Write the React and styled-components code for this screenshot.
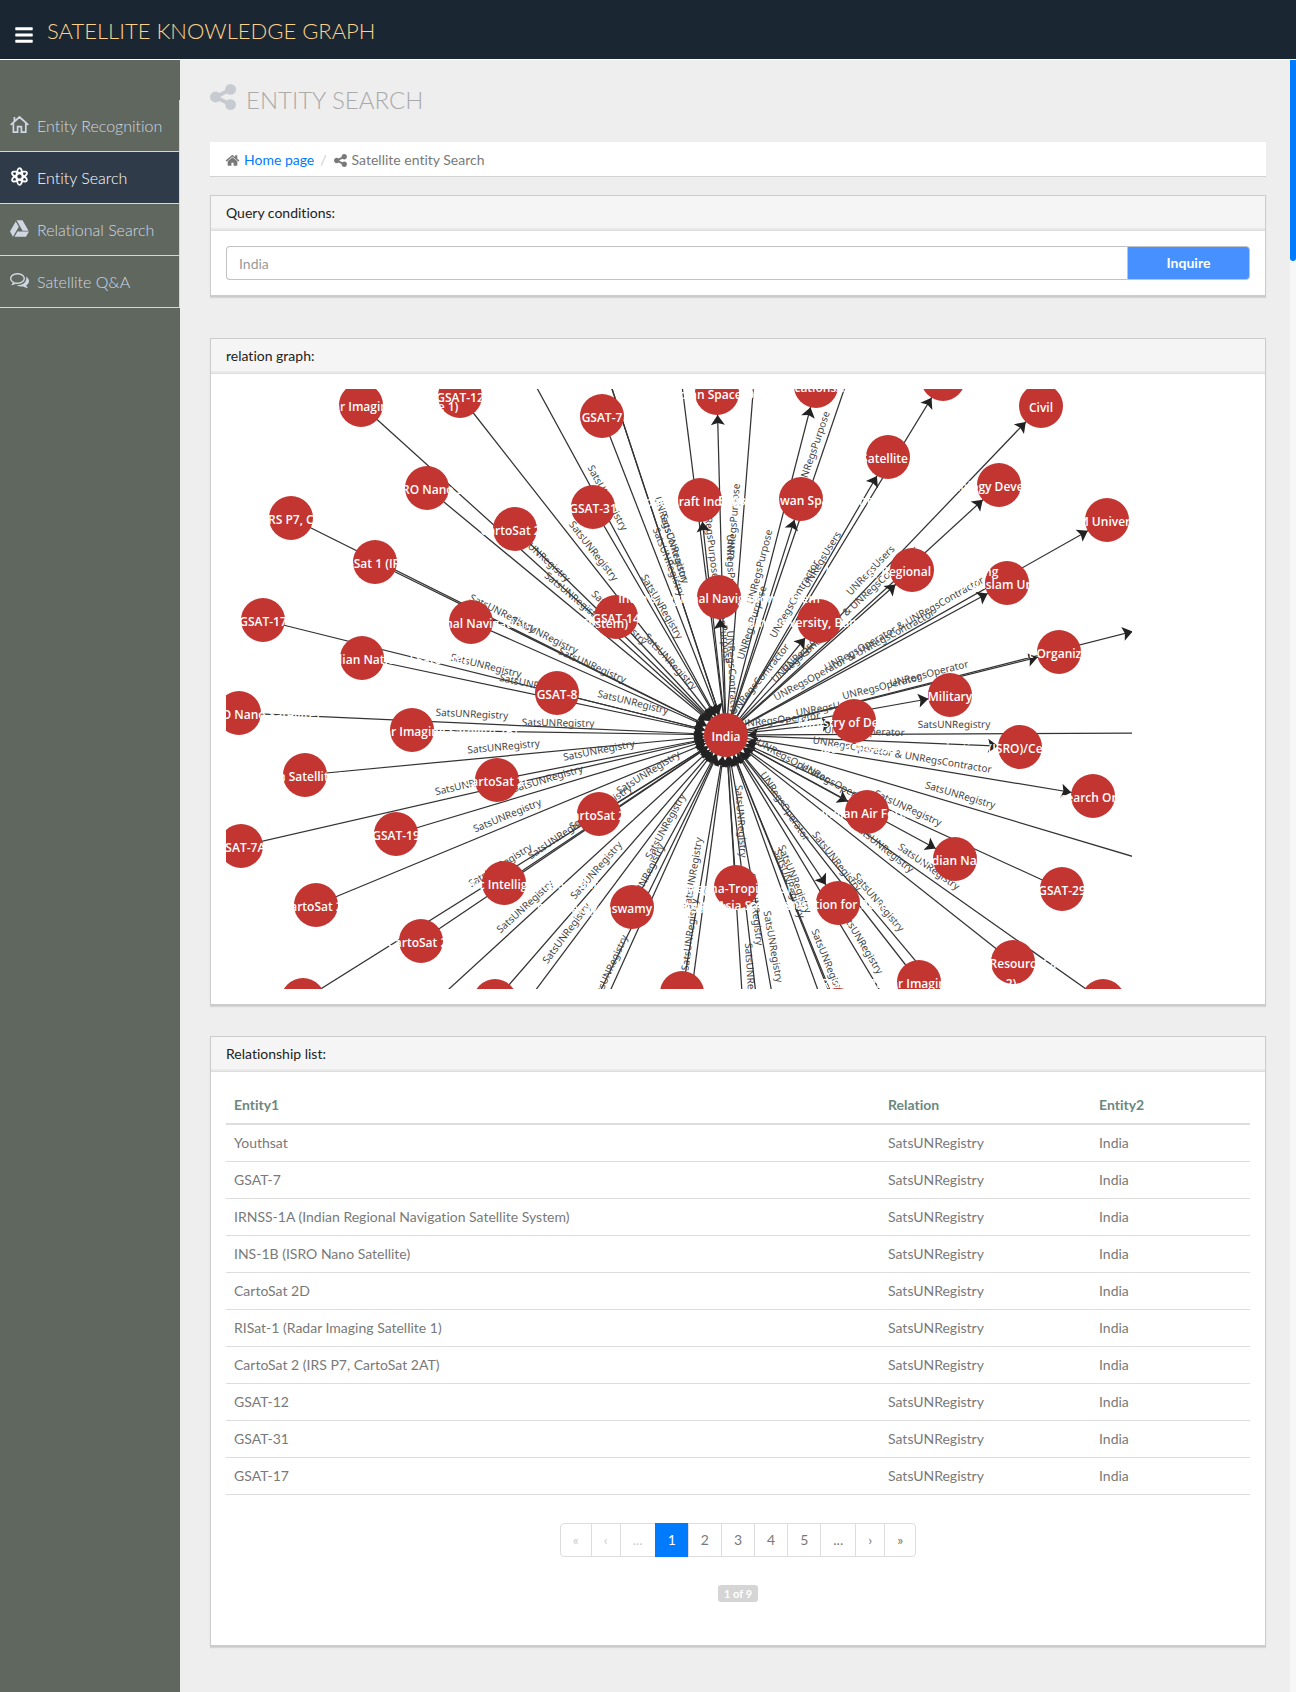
import React from "react";
import styled, { createGlobalStyle, css } from "styled-components";
import { FaBars, FaGoogleDrive } from "react-icons/fa";

const GlobalStyle = createGlobalStyle`
  *, *::before, *::after { box-sizing: border-box; }
  body {
    margin: 0;
    background: #eee;
    color: #797979;
    font: 400 14px/20px Lato, "Liberation Sans", sans-serif;
    font-variant-ligatures: none;
  }
`;

/* ---------- page frame ---------- */

const Header = styled.header`
  display: flex;
  align-items: center;
  gap: 13px;
  height: 60px;
  padding: 2px 14px 0;
  background: #1a2732;
  border-bottom: 1px solid #fff;
`;

const MenuToggle = styled.button`
  display: flex;
  padding: 8px 0 0;
  border: 0;
  background: none;
  color: #fff;
  font-size: 20px;
`;

const Brand = styled.a`
  color: #fed189;
  font-size: 22px;
  font-weight: 300;
  line-height: 28px;
  text-decoration: none;
  text-transform: uppercase;
`;

const Page = styled.div`
  position: relative;
  display: flex;
  min-height: calc(100vh - 60px);
`;

const Sidebar = styled.nav`
  flex: 0 0 180px;
  padding-top: 40px;
  background: #5f675f;
`;

const Menu = styled.ul`
  margin: 0;
  padding: 0;
  list-style: none;
`;

const MenuLink = styled.a`
  display: flex;
  align-items: center;
  gap: 8px;
  height: 52px;
  padding-left: 10px;
  border-right: 1px solid #d7d7d7;
  border-bottom: 1px solid #d7d7d7;
  color: #d0d7e2;
  font-size: 16px;
  font-weight: 300;
  line-height: 22px;
  text-decoration: none;
  ${(p) =>
    p.$active &&
    css`
      background: #2f3b49;
      color: #fff;
    `}
  svg { margin-bottom: 2px; }
`;

const Main = styled.main`
  flex: 1;
  min-width: 0;
  padding: 24px 30px 30px;
`;

const ScrollTrack = styled.div`
  position: absolute;
  top: 0;
  right: 0;
  bottom: 0;
  width: 6px;
  background: #f7f7f7;
`;

const ScrollThumb = styled.div`
  height: 201px;
  border-radius: 0 0 10px 10px;
  background: #007aff;
`;

/* ---------- heading ---------- */

const PageTitle = styled.h1`
  display: flex;
  align-items: flex-start;
  gap: 10px;
  height: 58px;
  margin: 0;
  color: #aaa;
  font-size: 24px;
  font-weight: 300;
  line-height: 32px;
  text-transform: uppercase;
  svg { color: #c7cbd1; }
`;

const Breadcrumb = styled.ol`
  display: flex;
  align-items: center;
  margin: 0 0 18px;
  padding: 8px 15px 6px;
  border-bottom: 1px solid #d2d2d2;
  background: #fff;
  list-style: none;
`;

const Crumb = styled.li`
  display: flex;
  align-items: center;
  gap: 4px;
  & + &::before {
    content: "/";
    padding: 0 2px 0 6px;
    color: #ccc;
  }
  a { color: #007aff; text-decoration: none; }
`;

/* ---------- panels ---------- */

const Panel = styled.section`
  margin-bottom: ${(p) => p.$gap || 0}px;
  border: 1px solid #ccc;
  border-bottom-width: 2px;
  background: #fff;
  box-shadow: 0 1px 1px rgba(0, 0, 0, 0.1);
`;

const PanelHead = styled.h2`
  margin: 0;
  padding: 7px 15px;
  border-bottom: 1px solid #ddd;
  box-shadow: inset 0 -2px 0 #e9e9e9;
  background: #f5f5f5;
  color: #222;
  font-size: 14px;
  font-weight: 400;
  line-height: 20px;
`;

const PanelBody = styled.div`
  padding: 15px;
`;

const SearchForm = styled.form`
  display: flex;
  height: 34px;
`;

const SearchInput = styled.input`
  flex: 1;
  min-width: 0;
  padding: 7px 12px 5px;
  border: 1px solid #c2c2c5;
  border-right: 0;
  border-radius: 4px 0 0 4px;
  background: #fff;
  color: #999;
  font: inherit;
`;

const SearchButton = styled.button`
  width: 123px;
  border: 1px solid #c4c4c4;
  border-radius: 0 4px 4px 0;
  background: #4690ff;
  color: #fff;
  font: inherit;
  font-weight: 700;
`;

/* ---------- table ---------- */

const Table = styled.table`
  width: 100%;
  border-collapse: separate;
  border-spacing: 0;
  table-layout: fixed;
  text-align: left;
  th, td { padding: 8px; }
  th {
    border-bottom: 2px solid #ddd;
    color: #6b8880;
    font-weight: 700;
  }
  td { border-bottom: 1px solid #ddd; }
`;

const RelationCol = styled.col`
  width: 211px;
`;

const EntityCol = styled.col`
  width: 159px;
`;

const Pagination = styled.ul`
  display: flex;
  justify-content: center;
  margin: 28px 0;
  padding: 0;
  list-style: none;
`;

const PageButton = styled.button`
  display: block;
  height: 34px;
  margin-left: -1px;
  padding: 6px 12px;
  border: 1px solid #ddd;
  background: #fff;
  color: #797979;
  font: inherit;
  li:first-child > & { margin-left: 0; border-radius: 4px 0 0 4px; }
  li:last-child > & { border-radius: 0 4px 4px 0; }
  &:disabled { color: #ccc; }
  &[aria-current="page"] {
    border-color: #007aff;
    background: #007aff;
    color: #fff;
  }
`;

const PageCount = styled.p`
  display: flex;
  justify-content: center;
  margin: 0;
  padding-bottom: 28px;
`;

const Badge = styled.span`
  padding: 2px 6px;
  border-radius: 3px;
  background: #d5d5d5;
  color: #fff;
  font-size: 11px;
  font-weight: 700;
  line-height: 13px;
`;

/* ---------- graph ---------- */

const GraphCanvas = styled.svg`
  display: block;
  overflow: hidden;
`;

const EdgeLine = styled.line`
  stroke: #333;
  stroke-width: 1.25;
`;

const EdgeLabel = styled.text`
  fill: #444;
  font: 400 10px "Noto Sans", "Open Sans", sans-serif;
  text-anchor: middle;
`;

const NodeCircle = styled.circle`
  fill: #c23531;
`;

const NodeLabel = styled.text`
  fill: #fff;
  font: 600 12px "Open Sans", "Noto Sans", sans-serif;
  text-anchor: middle;
`;

const HUB = { x: 726, y: 735 };
const R = 22;
const SAT = "SatsUNRegistry";
const OP = "UNRegsOperator";
const CON = "UNRegsContractor";
const BOTH = "UNRegsOperator & UNRegsContractor";
const PUR = "UNRegsPurpose";
const USE = "UNRegsUsers";

/* x, y, node label, edge label; SAT edges point at the hub, the others away from it */
const NODES = [
  [361, 405, "RISat-1 (Radar Imaging Satellite 1)", SAT],
  [460, 396, "GSAT-12", SAT],
  [427, 488, "INS-1B (ISRO Nano Satellite)", SAT],
  [291, 518, "CartoSat 2 (IRS P7, CartoSat 2AT)", SAT],
  [375, 562, "CartoSat 1 (IRS P5)", SAT],
  [515, 529, "CartoSat 2D", SAT],
  [471, 622, "IRNSS-1A (Indian Regional Navigation Satellite System)", SAT],
  [263, 620, "GSAT-17", SAT],
  [362, 658, "INSAT 4CR (Indian National Satellite)", SAT],
  [239, 713, "INS-1A (ISRO Nano Satellite)", SAT],
  [412, 730, "RISat-2B (Radar Imaging Satellite 2B)", SAT],
  [305, 775, "Indian Satellite R2B", SAT],
  [497, 780, "CartoSat 2F", SAT],
  [396, 834, "GSAT-19", SAT],
  [241, 846, "GSAT-7A", SAT],
  [316, 905, "CartoSat 2E", SAT],
  [504, 883, "EMI (Electronic Intelligence Satellite)", SAT],
  [421, 941, "CartoSat 2C", SAT],
  [303, 1000, "", SAT],
  [495, 1001, "", SAT],
  [602, 416, "GSAT-7", SAT],
  [593, 507, "GSAT-31", SAT],
  [616, 617, "GSAT-14", SAT],
  [557, 693, "GSAT-8", SAT],
  [599, 814, "CartoSat 2A", SAT],
  [632, 907, "Sat (Narayanswamy Micro Satell)", SAT],
  [736, 887, "(Megha-Tropiques)", SAT],
  [682, 993, "", SAT],
  [919, 982, "RISat-2 (Radar Imaging Satellite 2)", SAT],
  [1013, 962, "IRS (ResourceSat", SAT],
  [1103, 1001, "", SAT],
  [1062, 889, "GSAT-29", SAT],
  [717, 393, "Indian Space Org", PUR],
  [816, 386, "Communications/Research", PUR],
  [700, 500, "Spacecraft Industries", PUR],
  [801, 499, "Satish Dhawan Space Centre", PUR],
  [719, 597, "India's Regional Navigation System", CON],
  [819, 621, "Jain University, Bangalore", CON],
  [943, 379, "", USE],
  [888, 457, "Satellite (", CON],
  [1041, 406, "Civil", USE],
  [999, 485, "Technology Development", BOTH],
  [912, 570, "Institute, Regional Monitoring", CON],
  [1107, 520, "SRM University", BOTH],
  [1007, 583, "Noorul Islam University", BOTH],
  [1059, 652, "Joint Organization", OP],
  [950, 695, "Military", USE],
  [854, 721, "Ministry of Defence", OP],
  [1020, 747, "Space Research Organisation (ISRO)/Centre for Atmospheric Programs", OP],
  [1093, 796, "Space Research Organisation", BOTH],
  [867, 812, "Indian Air Force", OP],
  [955, 859, "Indian Navy", OP],
  [838, 903, "Organisation for Research", OP],
];

/* neighbours beyond the visible part of the canvas */
const FAR_NODES = [
  [483, 289, "", SAT],
  [612, 389, "", SAT],
  [593, 331, "", CON],
  [675, 330, "", PUR],
  [761, 292, "", PUR],
  [926, 150, "", PUR],
  [1160, 733, "", SAT],
  [1168, 867, "", SAT],
  [1154, 626, "", OP],
  [435, 1125, "", SAT],
  [353, 1077, "", SAT],
  [592, 1008, "", SAT],
  [520, 1190, "", SAT],
  [675, 1115, "", SAT],
  [755, 1203, "", SAT],
  [764, 1064, "", SAT],
  [798, 1140, "", SAT],
  [828, 1018, "", SAT],
  [904, 1178, "", SAT],
  [970, 1140, "", SAT],
  [1003, 1065, "", SAT],
  [838, 1010, "", SAT],
];

const EDGES = [...FAR_NODES, ...NODES];

function Arrow({ x, y, angle }) {
  return (
    <path
      d="M0 0L-10 7L-8 0L-10 -7Z"
      fill="#222"
      transform={`translate(${x} ${y}) rotate(${angle})`}
    />
  );
}

/* each label sits a little nearer to the end that its edge starts from */
function Edge({ x, y, label }) {
  const dx = x - HUB.x;
  const dy = y - HUB.y;
  const length = Math.hypot(dx, dy);
  const angle = (Math.atan2(dy, dx) * 180) / Math.PI;
  const inward = label === SAT;
  const at = inward ? R : length - R;
  const middle = length / 2 + (inward ? 11 : -9);
  let turn = angle;
  if (turn > 90) turn -= 180;
  if (turn < -90) turn += 180;
  const along = (d) => [HUB.x + (dx / length) * d, HUB.y + (dy / length) * d];
  const [ax, ay] = along(at);
  const [lx, ly] = along(middle);
  return (
    <g>
      <EdgeLine x1={HUB.x} y1={HUB.y} x2={x} y2={y} />
      <Arrow x={ax} y={ay} angle={inward ? angle + 180 : angle} />
      <EdgeLabel transform={`translate(${lx} ${ly}) rotate(${turn})`} y="-6">
        {label}
      </EdgeLabel>
    </g>
  );
}

function RelationGraph() {
  return (
    <GraphCanvas width="906" height="600" viewBox="226 389 906 600" role="img" aria-label="Relations of India">
      {EDGES.map(([x, y, name, label]) => (
        <Edge key={`${x}-${y}`} x={x} y={y} label={label} />
      ))}
      {NODES.map(([x, y]) => (
        <NodeCircle key={`${x}-${y}`} cx={x} cy={y} r={R} />
      ))}
      <NodeCircle cx={838} cy={1010} r={R} />
      <NodeCircle cx={HUB.x} cy={HUB.y} r={R} />
      {NODES.filter(([, , name]) => name).map(([x, y, name]) => (
        <NodeLabel key={name} x={x} y={y + 6}>{name}</NodeLabel>
      ))}
      <NodeLabel x={736} y={910}>(South Asia Satellite)</NodeLabel>
      <NodeLabel x={HUB.x} y={HUB.y + 6}>India</NodeLabel>
    </GraphCanvas>
  );
}

/* ---------- icons ---------- */

const SHARE =
  "M1344 1024q133 0 226.5 93.5t93.5 226.5-93.5 226.5-226.5 93.5-226.5-93.5-93.5-226.5q0-12 2-34l-360-180q-92 86-218 86-133 0-226.5-93.5t-93.5-226.5 93.5-226.5 226.5-93.5q126 0 218 86l360-180q-2-22-2-34 0-133 93.5-226.5t226.5-93.5 226.5 93.5 93.5 226.5-93.5 226.5-226.5 93.5q-126 0-218-86l-360 180q2 22 2 34t-2 34l360 180q92-86 218-86z";
const HOUSE =
  "M1472 992v480q0 26-19 45t-45 19h-384v-384h-256v384h-384q-26 0-45-19t-19-45v-480q0-1 .5-3t.5-3l575-474 575 474q1 2 1 6zm223-69l-62 74q-8 9-21 11h-3q-13 0-21-7l-692-577-692 577q-12 8-24 7-13-2-21-11l-62-74q-8-10-7-23.5t11-21.5l719-599q32-26 76-26t76 26l244 204v-195q0-14 9-23t23-9h192q14 0 23 9t9 23v408l219 182q10 8 11 21.5t-7 23.5z";
const COMMENTS =
  "M704 384q-153 0-286 52t-211.5 141-78.5 191q0 82 53 158t149 132l97 56-35 84q34-20 62-39l44-31 53 10q78 14 153 14 153 0 286-52t211.5-141 78.5-191-78.5-191-211.5-141-286-52zm0-128q191 0 353.5 68.5t256.5 186.5 94 257-94 257-256.5 186.5-353.5 68.5q-86 0-176-16-124 88-278 128-36 9-86 16h-3q-11 0-20.5-8t-11.5-21q-1-3-1-6.5t.5-6.5 2-6l2.5-5 3.5-5.5 4-5 4.5-5 4-4.5q5-6 23-25t26-29.5 22.5-29 25-38.5 20.5-44q-124-72-195-177t-71-224q0-139 94-257t256.5-186.5 353.5-68.5zm822 1169q10 24 20.5 44t25 38.5 22.5 29 26 29.5 23 25q1 1 4 4.5t4.5 5 4 5 3.5 5.5l2.5 5 2 6 .5 6.5-1 6.5q-3 14-13 22t-22 7q-50-7-86-16-154-40-278-128-90 16-176 16-271 0-472-132 58 4 88 4 161 0 309-45t264-129q125-92 192-212t67-254q0-77-23-152 129 71 204 178t75 230q0 120-71 224.5t-195 176.5z";

function Glyph({ d, size, viewBox = "0 0 1792 1792" }) {
  return (
    <svg width={size} height={size} viewBox={viewBox} fill="currentColor" aria-hidden="true">
      <path d={d} />
    </svg>
  );
}

function HomeOutline() {
  return (
    <svg width="19" height="19" viewBox="0 0 19 19" fill="none" stroke="currentColor" strokeWidth="1.7" aria-hidden="true">
      <path d="M0.7 9.8L9.5 2L18.3 9.8M3.4 8.5V17.2H7.6V11.6H11.4V17.2H15.8V8.5M4.4 6V2" />
    </svg>
  );
}

function AtomIcon() {
  return (
    <svg width="19" height="19" viewBox="0 0 19 19" fill="none" stroke="currentColor" strokeWidth="1.7" aria-hidden="true">
      <ellipse cx="9.5" cy="9.5" rx="3" ry="8.4" />
      <ellipse cx="9.5" cy="9.5" rx="3" ry="8.4" transform="rotate(60 9.5 9.5)" />
      <ellipse cx="9.5" cy="9.5" rx="3" ry="8.4" transform="rotate(120 9.5 9.5)" />
    </svg>
  );
}

const MENU = [
  ["Entity Recognition", <HomeOutline />],
  ["Entity Search", <AtomIcon />],
  ["Relational Search", <FaGoogleDrive size={19} />],
  ["Satellite Q&A", <Glyph d={COMMENTS} size={19} viewBox="0 128 1792 1664" />],
];

const ROWS = [
  "Youthsat",
  "GSAT-7",
  "IRNSS-1A (Indian Regional Navigation Satellite System)",
  "INS-1B (ISRO Nano Satellite)",
  "CartoSat 2D",
  "RISat-1 (Radar Imaging Satellite 1)",
  "CartoSat 2 (IRS P7, CartoSat 2AT)",
  "GSAT-12",
  "GSAT-31",
  "GSAT-17",
];

const PAGES = [
  ["«", true], ["‹", true], ["...", true],
  ["1"], ["2"], ["3"], ["4"], ["5"],
  ["..."], ["›"], ["»"],
];

export default function App() {
  return (
    <>
      <GlobalStyle />
      <Header>
        <MenuToggle type="button" aria-label="Toggle menu"><FaBars /></MenuToggle>
        <Brand href="#">Satellite Knowledge Graph</Brand>
      </Header>
      <Page>
        <Sidebar>
          <Menu>
            {MENU.map(([name, icon]) => (
              <li key={name}>
                <MenuLink href="#" $active={name === "Entity Search"}>{icon}{name}</MenuLink>
              </li>
            ))}
          </Menu>
        </Sidebar>
        <Main>
          <PageTitle>
            <Glyph d={SHARE} size={26} viewBox="128 128 1536 1536" />
            Entity Search
          </PageTitle>
          <Breadcrumb>
            <Crumb><Glyph d={HOUSE} size={15} /><a href="#">Home page</a></Crumb>
            <Crumb><Glyph d={SHARE} size={15} />Satellite entity Search</Crumb>
          </Breadcrumb>
          <Panel $gap={41}>
            <PanelHead>Query conditions:</PanelHead>
            <PanelBody>
              <SearchForm onSubmit={(e) => e.preventDefault()}>
                <SearchInput aria-label="Entity" defaultValue="India" />
                <SearchButton type="submit">Inquire</SearchButton>
              </SearchForm>
            </PanelBody>
          </Panel>
          <Panel $gap={30}>
            <PanelHead>relation graph:</PanelHead>
            <PanelBody><RelationGraph /></PanelBody>
          </Panel>
          <Panel>
            <PanelHead>Relationship list:</PanelHead>
            <PanelBody>
              <Table>
                <colgroup><col /><RelationCol /><EntityCol /></colgroup>
                <thead>
                  <tr><th>Entity1</th><th>Relation</th><th>Entity2</th></tr>
                </thead>
                <tbody>
                  {ROWS.map((name) => (
                    <tr key={name}><td>{name}</td><td>SatsUNRegistry</td><td>India</td></tr>
                  ))}
                </tbody>
              </Table>
              <Pagination>
                {PAGES.map(([text, disabled], i) => (
                  <li key={i}>
                    <PageButton type="button" disabled={disabled} aria-current={text === "1" ? "page" : undefined}>
                      {text}
                    </PageButton>
                  </li>
                ))}
              </Pagination>
              <PageCount><Badge>1 of 9</Badge></PageCount>
            </PanelBody>
          </Panel>
        </Main>
        <ScrollTrack><ScrollThumb /></ScrollTrack>
      </Page>
    </>
  );
}
